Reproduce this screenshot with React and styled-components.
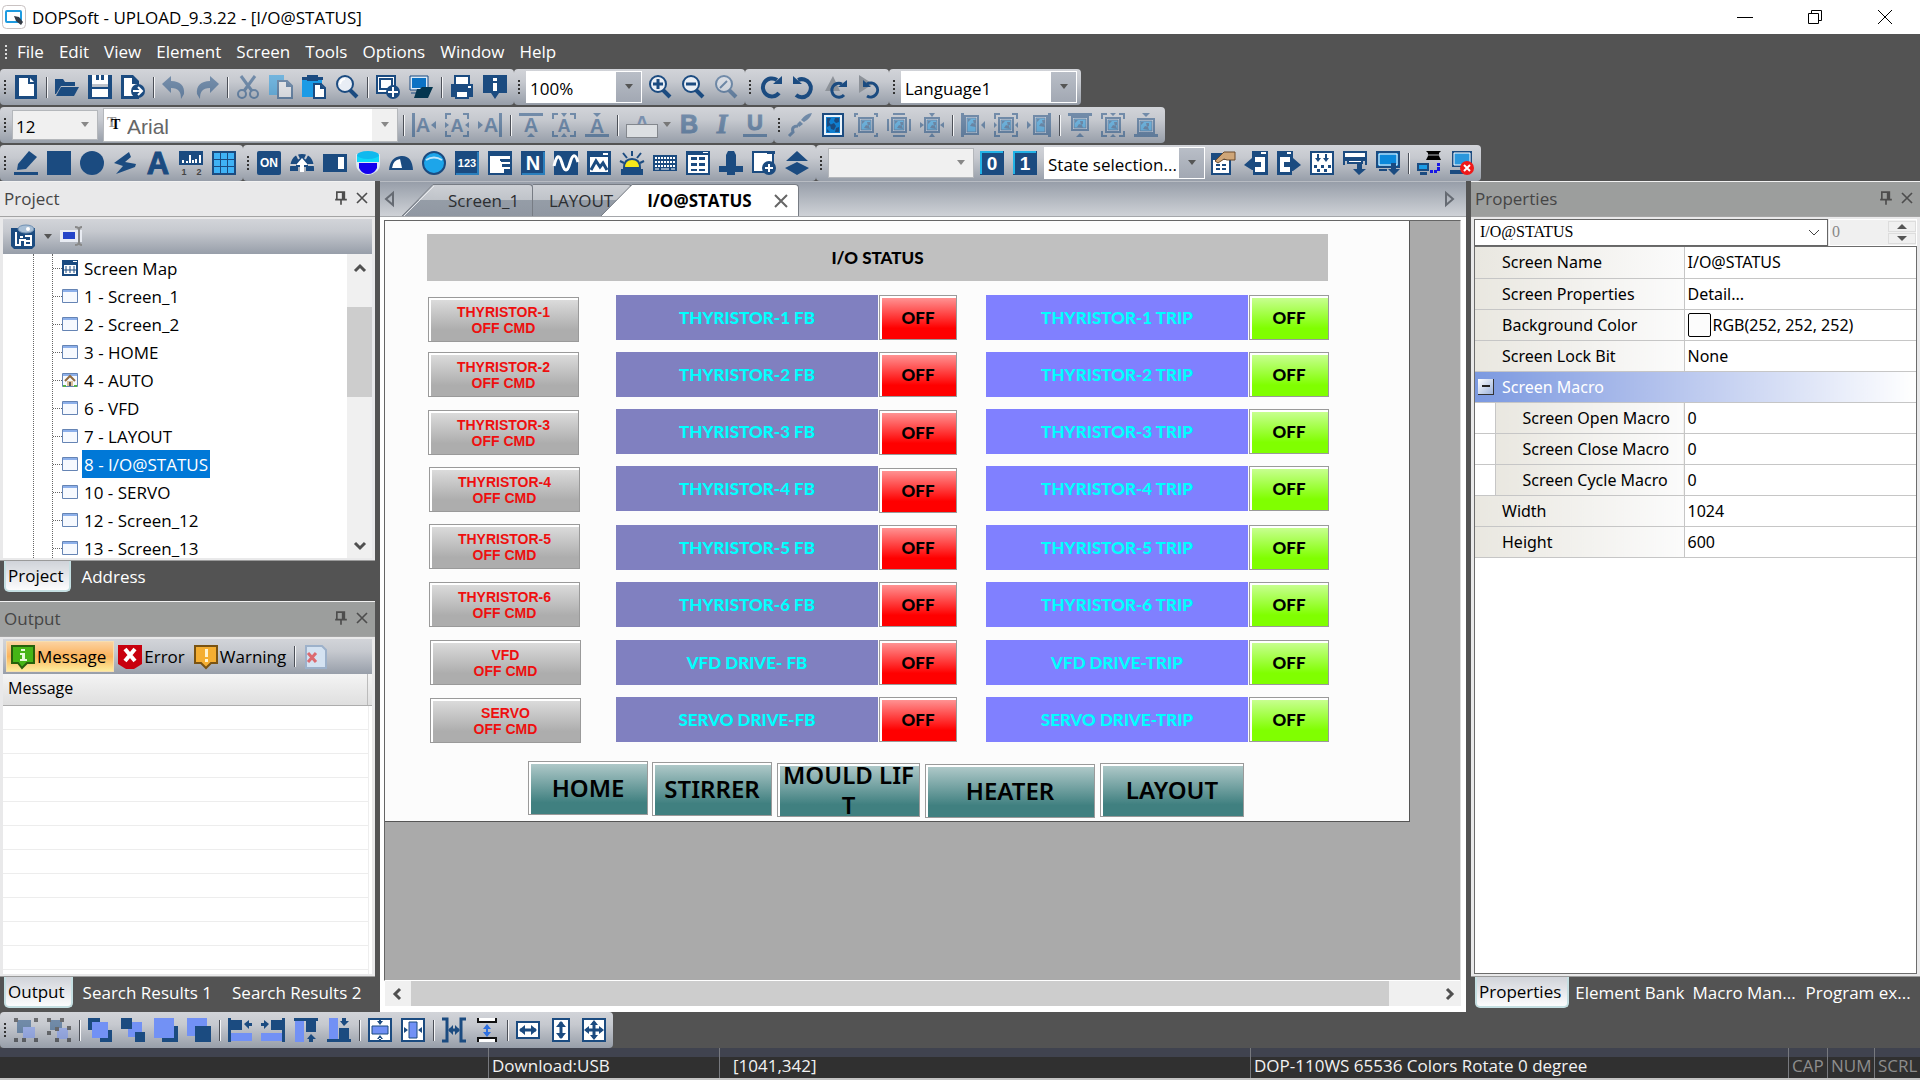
import React, { useState } from 'react'
import styled, { createGlobalStyle, css } from 'styled-components'

const NAVY = '#1b4b80'
const SKY = '#1a9be6'
const PERI = '#7291f5'
const UI_FONT = '"Open Sans", "Noto Sans", sans-serif'

const GlobalStyle = createGlobalStyle`
  * { box-sizing: border-box; }
  body {
    margin: 0;
    background: #535353;
    color: #000;
    font-family: ${UI_FONT};
    font-size: 17px;
  }
  button, input, select { font: inherit; color: inherit; margin: 0; }
  button { border: 0; padding: 0; background: none; }
  ul { list-style: none; margin: 0; padding: 0; }
`

/* ---------- icons ---------- */

const glyph = (x, y, size, text, fill = NAVY, extra = {}) => (
  <text x={x} y={y} fontSize={size} fontWeight='700' textAnchor='middle'
    fontFamily='"Liberation Sans", sans-serif' fill={fill} {...extra}>{text}</text>
)

const Lens = ({ children }) => <>
  <path d='M15 15l7 7' stroke={NAVY} strokeWidth='4'/>
  <circle cx='10' cy='9' r='8' fill='#e9eef5' stroke={NAVY} strokeWidth='2'/>
  {children}
</>

const Photo = ({ x = 5, y = 5, w = 14, h = 14 }) => <>
  <rect x={x} y={y} width={w} height={h} fill='#e4f1fb' stroke={NAVY} strokeWidth='2'/>
  <rect x={x + 2} y={y + 2} width={w - 4} height={h - 4} fill={SKY} stroke={NAVY} strokeWidth='1'/>
  <path d={`M${x + 3} ${y + 3}h3l-3 3zM${x + 8} ${y + 4}h3v3l-2 1zM${x + 5} ${y + 10}l2-3 3 1 1 3z`} fill={NAVY}/>
</>

const Corners = () => (
  <path d='M1 6V1h5M18 1h5v5M23 18v5h-5M6 23H1v-5' fill='none' stroke={NAVY} strokeWidth='2'/>
)

const ICONS = {
  file: <><path d='M1 0h22v24H1z' fill={NAVY}/><path d='M5 3h9v6h6v12H5z' fill='#fff'/><path d='M16 3l4 4h-4z' fill='#fff'/></>,
  open: <><path d='M0 4h8l2 3h10v4H6l-5 8H0z' fill={NAVY}/><path d='M6 12h18l-5 9H1z' fill={NAVY}/></>,
  save: <><path d='M0 0h4v12h16V0h4v24H0z' fill={NAVY}/><path d='M4 0h16v9H4zM4 14h16v8H4z' fill='#fff'/><path d='M8 0h3v5H8zM13 0h3v5h-3z' fill={NAVY}/></>,
  saveAs: <><path d='M0 0h12l6 6v18H0z' fill={NAVY}/><path d='M3 3h8v6h5v12H3z' fill='#fff'/><circle cx='17' cy='16' r='7' fill={NAVY}/><path d='M12 16h8M17 12l4 4-4 4' fill='none' stroke='#fff' strokeWidth='2'/></>,
  undo: <path d='M0 9L9 1v5c9 0 14 5 13 13l-3 5c0-7-2-11-10-11v5z' fill={NAVY}/>,
  redo: <path d='M24 9L15 1v5C6 6 1 11 2 19l3 5c0-7 2-11 10-11v5z' fill={NAVY}/>,
  cut: <g fill='none' stroke={NAVY}><circle cx='6' cy='19' r='4' strokeWidth='2'/><circle cx='18' cy='19' r='4' strokeWidth='2'/><path d='M8 16L19 1M16 16L5 1' strokeWidth='3'/></g>,
  copy: <><path d='M0 0h15v20H0z' fill={SKY}/><path d='M9 6h9l5 5v12H9z' fill='#fff' stroke={NAVY} strokeWidth='2'/><path d='M17 6v6h6' fill={NAVY}/></>,
  paste: <><path d='M0 2h20v20H0z' fill={SKY}/><path d='M5 0h11v6H5zM0 2h5v3H0zM16 2h5v3h-5z' fill={NAVY}/><path d='M12 9h7l4 4v10H12z' fill='#fff' stroke={NAVY} strokeWidth='2'/><path d='M18 9v5h5' fill={NAVY}/></>,
  preview: <Lens><path d='M5 9q1-5 5-5' fill='none' stroke='#fff' strokeWidth='2'/></Lens>,
  upload: <><path d='M1 1h18v17H1z' fill='#fff' stroke={NAVY} strokeWidth='2'/><path d='M4 4h12v10H4z' fill='#fff' stroke={NAVY} strokeWidth='2'/><circle cx='17' cy='17' r='7' fill={NAVY}/><path d='M17 12v10M12 17h10' stroke='#fff' strokeWidth='2'/></>,
  download: <><path d='M2 2h16v12H2z' fill='#0b72c4' stroke='#dbeaf7' strokeWidth='2'/><path d='M1 1h18v14H1zM2 18h6' fill='none' stroke={NAVY}/><path d='M8 14h3l2-2h11l-5 11H5z' fill='#05364f'/></>,
  print: <><path d='M4 0h16v9H4z' fill={NAVY}/><path d='M6 2h12v7H6z' fill='#fff'/><path d='M1 9h22v13H1z' fill={NAVY}/><path d='M6 16h12v7H6z' fill='#fff' stroke={NAVY} strokeWidth='2'/><path d='M18 11h3v2h-3z' fill='#fff'/></>,
  info: <><path d='M0 0h24v18h-8l-4 6-4-6H0z' fill={NAVY}/><path d='M10 3h4v3h-4zM10 8h4v8h-4z' fill='#fff'/></>,
  zoomIn: <Lens><path d='M10 4v10M5 9h10' stroke={NAVY} strokeWidth='3'/></Lens>,
  zoomOut: <Lens><path d='M5 9h10' stroke={NAVY} strokeWidth='3'/></Lens>,
  zoomFit: <Lens><path d='M6 13l7-7' stroke={NAVY} strokeWidth='2'/></Lens>,
  rotateR: <><path d='M18 5A9 9 0 1 0 20 18' fill='none' stroke={NAVY} strokeWidth='4'/><path d='M14 9h9V1z' fill={NAVY}/></>,
  rotateL: <><path d='M6 5A9 9 0 1 1 4 20' fill='none' stroke={NAVY} strokeWidth='4'/><path d='M10 9H1V1z' fill={NAVY}/></>,
  stepR: <><path d='M0 16L8 1l7 15z' fill='#8d9299'/><path d='M17 9a7 7 0 1 0 2 11' fill='none' stroke={NAVY} strokeWidth='3'/><path d='M13 12h9V5z' fill={NAVY}/></>,
  stepL: <><path d='M1 0l14 9L1 18z' fill='#8d9299'/><path d='M9 9a7 7 0 1 1 0 12' fill='none' stroke={NAVY} strokeWidth='3'/><path d='M13 12H5V5z' fill={NAVY}/></>,
  textLeft: <><path d='M0 0h3v24H0z' fill={NAVY}/>{glyph(11, 19, 20, 'A')}<path d='M24 8v8l-5-4z' fill={NAVY}/></>,
  textCenter: <><Corners/>{glyph(12, 19, 18, 'A')}<path d='M0 9l4 3-4 3zM24 9l-4 3 4 3z' fill={NAVY}/></>,
  textRight: <><path d='M21 0h3v24h-3z' fill={NAVY}/>{glyph(13, 19, 20, 'A')}<path d='M0 8v8l5-4z' fill={NAVY}/></>,
  textTop: <><path d='M0 0h24v3H0z' fill={NAVY}/>{glyph(12, 19, 20, 'A')}<path d='M8 24h8l-4-4z' fill={NAVY}/></>,
  textMiddle: <><Corners/>{glyph(12, 19, 18, 'A')}<path d='M9 0h6l-3 4zM9 24h6l-3-4z' fill={NAVY}/></>,
  textBottom: <><path d='M0 21h24v3H0z' fill={NAVY}/>{glyph(12, 20, 20, 'A')}<path d='M8 0h8l-4 4z' fill={NAVY}/></>,
  bold: glyph(12, 20, 25, 'B', NAVY, { stroke: NAVY }),
  italic: glyph(12, 20, 27, 'I', NAVY, { fontStyle: 'italic', fontFamily: '"Liberation Serif", serif', stroke: NAVY }),
  underline: <>{glyph(12, 17, 22, 'U', NAVY, { stroke: NAVY })}<path d='M0 21h24v3H0z' fill={NAVY}/></>,
  brush: <><path d='M24 0q-2 6-8 9l-3-2q4-6 11-7zM12 8l3 3-4 3-2-3z' fill={NAVY}/><path d='M10 13q-7 0-5 6l-4 4' fill='none' stroke={NAVY} strokeWidth='3'/></>,
  photo: <><path d='M1 0h22v24H1z' fill={NAVY}/><path d='M4 3h16v18H4z' fill='#0f7fd0' stroke='#eaf4fc' strokeWidth='2'/><path d='M6 5h4l-2 4 2 3-4 2zM14 5h4v4l-3 1-2-2zM9 12l4-2 2 3-2 4-3-1zM15 15l3-1v5h-4zM6 16l3 3H6z' fill={NAVY}/></>,
  fit1: <><Photo/><path d='M1 4V1h3M20 1h3v3M23 20v3h-3M4 23H1v-3' fill='none' stroke={NAVY} strokeWidth='2'/></>,
  fit2: <><Photo/><path d='M6 1h12M6 23h12M1 6v12M23 6v12' stroke={NAVY} strokeWidth='2'/></>,
  fit3: <><Photo/><path d='M9 0h6l-3 4zM9 24h6l-3-4zM0 9l4 3-4 3zM24 9l-4 3 4 3z' fill={NAVY}/></>,
  picLeft: <><path d='M0 0h3v24H0z' fill={NAVY}/><Photo x={4} y={3} w={13} h={18}/><path d='M24 8v8l-4-4z' fill={NAVY}/></>,
  picCenter: <><Corners/><Photo/><path d='M0 9l3 3-3 3zM24 9l-3 3 3 3z' fill={NAVY}/></>,
  picRight: <><path d='M21 0h3v24h-3z' fill={NAVY}/><Photo x={7} y={3} w={13} h={18}/><path d='M0 8v8l4-4z' fill={NAVY}/></>,
  picTop: <><path d='M0 0h24v3H0z' fill={NAVY}/><Photo x={4} y={4} w={16} h={13}/><path d='M8 24h8l-4-4z' fill={NAVY}/></>,
  picMiddle: <><Corners/><Photo/><path d='M9 0h6l-3 3zM9 24h6l-3-3z' fill={NAVY}/></>,
  picBottom: <><path d='M0 21h24v3H0z' fill={NAVY}/><Photo x={4} y={6} w={16} h={14}/><path d='M8 0h8l-4 4z' fill={NAVY}/></>,
  pencil: <><path d='M4 13L15 0l8 6-11 12-9 1z' fill={NAVY}/><path d='M0 21h24v3H0z' fill={NAVY}/></>,
  square: <path d='M0 0h24v24H0z' fill={NAVY}/>,
  circle: <circle cx='12' cy='12' r='12' fill={NAVY}/>,
  polygon: <path d='M16 1L1 12l9 3-7 8 19-7 1-3-11-2 6-5z' fill={NAVY}/>,
  text: glyph(12, 23, 31, 'A', NAVY, { stroke: NAVY }),
  scale: <><path d='M0 0h24v14H0z' fill={NAVY}/><path d='M4 9v3M8 10v2M11 4v8M14 9v3M17 8v4M21 4v8' stroke='#fff' strokeWidth='2'/>{glyph(5, 24, 9, '1', '#444')}{glyph(20, 24, 9, '2', '#444')}</>,
  table: <><path d='M0 0h24v24H0z' fill={NAVY}/><path d='M2 2h6v6H2zM9 2h6v6H9zM16 2h6v6h-6zM2 9h6v6H2zM9 9h6v6H9zM16 9h6v6h-6zM2 16h6v6H2zM9 16h6v6H9zM16 16h6v6h-6z' fill='#3fb2f5'/></>,
  on: <><rect width='24' height='24' rx='2' fill={NAVY}/>{glyph(12, 16, 12, 'ON', '#fff')}</>,
  meter: <><path d='M0 17Q1 3 12 3t12 14v3h-8v-4H8v4H0z' fill={NAVY}/><path d='M6 2l3 6M18 2l-3 6M0 14h6M18 14h6' stroke='#c9ccd2' strokeWidth='2'/><path d='M12 7l6 7h-4v7h-4v-7H6z' fill='#fff'/></>,
  slider: <><path d='M0 3h24v18H0z' fill={NAVY}/><path d='M15 6h6v12h-6z' fill='#fff'/></>,
  tank: <><path d='M0 3h24v10q0 9-12 11Q0 22 0 13z' fill='#dfe8f2'/><path d='M3 12h18v5q-3 6-9 6t-9-6z' fill='#1200ee'/><path d='M1 4v7h22V4z' fill='#10d8f8'/><ellipse cx='12' cy='4' rx='11' ry='4' fill='#10b9ee'/></>,
  gauge: <><path d='M0 19Q1 6 12 5t12 14z' fill={NAVY}/><path d='M3 17q1-8 8-9l2 9z' fill='#fff'/></>,
  lamp: <><circle cx='12' cy='12' r='11' fill='#1da5ea' stroke={NAVY} strokeWidth='2'/><path d='M4 9q8-5 16 0' fill='none' stroke='#bfe6fb' strokeWidth='2'/></>,
  numeric: <><path d='M0 0h24v24H0z' fill={NAVY}/><path d='M23 1v22H1' fill='none' stroke='#2a7fbd' strokeWidth='2'/>{glyph(12, 16, 11, '123', '#fff')}</>,
  list: <><path d='M0 0h24v24H0z' fill={NAVY}/><path d='M2 5h20v3H13v3h9v2h-8v3h8v2h-6v4H2z' fill='#fff'/><path d='M12 8h8v2h-8zM14 13h8v2h-8z' fill={NAVY}/></>,
  n: <><path d='M0 0h24v24H0z' fill={NAVY}/><path d='M1 23h22V1' fill='none' stroke='#2a7fbd' strokeWidth='2'/>{glyph(12, 19, 20, 'N', '#fff')}</>,
  wave: <><path d='M0 0h24v24H0z' fill={NAVY}/><path d='M0 15Q4-2 8 12t8 0 8-1' fill='none' stroke='#fff' strokeWidth='3'/></>,
  trend: <><path d='M0 0h24v24H0z' fill={NAVY}/><path d='M3 6h18v15H3zM16 2h5v2h-5z' fill='#fff'/><path d='M4 19l5-9 4 6 3-4 4 7' fill='none' stroke={NAVY} strokeWidth='3'/></>,
  alarm: <><path d='M4 17q0-9 8-9t8 9z' fill='#f8e81a' stroke={NAVY} strokeWidth='2'/><path d='M1 18h22v6H1zM11 0h2v5h-2z' fill={NAVY}/><path d='M3 2l4 5M21 2l-4 5M0 10l4 2M24 10l-4 2' stroke={NAVY} strokeWidth='2'/></>,
  keyboard: <><path d='M0 4h24v16H0z' fill={NAVY}/><path d='M2 7h20M2 11h20M2 15h20' stroke='#fff' strokeWidth='2' strokeDasharray='2 1'/><path d='M2 18h4M8 18h8M18 18h4' stroke='#fff'/></>,
  recipe: <><path d='M0 0h24v24H0z' fill={NAVY}/><path d='M2 4h20v18H2z' fill='#fff'/><path d='M5 6h6v3H5zM13 6h6v3h-6zM5 12h6v3H5zM13 12h6v3h-6zM5 18h6v2H5zM13 18h6v2h-6z' fill={NAVY}/><path d='M17 1h5v1h-5z' fill='#fff'/></>,
  pipe: <path d='M9 0h6l2 4v11h7v6h-8v3H8v-3H0v-6h7V4z' fill={NAVY}/>,
  pageAdd: <><path d='M1 1h20v20H1z' fill='#fff' stroke={NAVY} strokeWidth='2'/><path d='M15 0h8v3h-8z' fill={NAVY}/><circle cx='17' cy='17' r='7' fill={NAVY}/><path d='M17 13v8M13 17h8' stroke='#fff' strokeWidth='2'/></>,
  flip: <path d='M12 0l11 10H1zM12 11l12 6-12 7-12-7z' fill={NAVY}/>,
  state0: <><path d='M0 0h24v24H0z' fill={NAVY}/><path d='M1 23V1h22' fill='none' stroke='#22b3e6' strokeWidth='2'/>{glyph(12, 19, 19, '0', '#fff')}</>,
  state1: <><path d='M0 0h24v24H0z' fill={NAVY}/><path d='M1 23V1h22' fill='none' stroke='#22b3e6' strokeWidth='2'/>{glyph(12, 19, 19, '1', '#fff')}</>,
  props: <><path d='M0 2h20v22H0z' fill={NAVY}/><path d='M2 9h16v13H2z' fill='#fff'/><path d='M5 14h4M11 14h4M5 18h4M11 18h4' stroke={NAVY} strokeWidth='2'/><path d='M4 10l9-9h11v8h-8l-3-1-6 4z' fill='#cfa678' stroke='#6a4b2c'/></>,
  prevScreen: <><path d='M8 0h16v24H9v-5h-1L0 14l8-7z' fill={NAVY}/><path d='M11 6h10v15H11v-5h6v-5h-6zM17 1h5v2h-5z' fill='#fff'/></>,
  nextScreen: <><path d='M0 0h16v7l8 7-8 6H15v4H0z' fill={NAVY}/><path d='M3 6h10v5H7v5h6v5H3zM10 1h4v2h-4z' fill='#fff'/></>,
  compile: <><path d='M1 1h22v22H1z' fill='#fff' stroke={NAVY} strokeWidth='2'/><path d='M8 3v5M16 3v5' stroke={NAVY} strokeWidth='2'/><path d='M5 7h6l-3 4zM13 7h6l-3 4zM4 14h3v3H4zM11 14h3v3h-3zM18 14h3v3h-3zM7 18h3v3H7zM14 18h3v3h-3z' fill={NAVY}/></>,
  dlAll: <><path d='M1 1h22v6H1zM5 7h14v5H5z' fill='#fff' stroke={NAVY} strokeWidth='2'/><path d='M1 14V9h22v5' fill='none' stroke={NAVY} strokeWidth='2'/><path d='M14 12h5v6h4l-7 6-6-6h4z' fill={NAVY}/></>,
  dlScreen: <><path d='M1 1h22v15H1z' fill='#0b88da' stroke={NAVY} strokeWidth='2'/><path d='M3 3h18v11H3z' fill='none' stroke='#fff'/><path d='M3 18h8v2H3z' fill={NAVY}/><path d='M15 12h5v6h4l-6 6-6-6h3z' fill={NAVY}/></>,
  simOn: <><path d='M9 0h15l-2 2v3l2 4H9l2-4V2z' fill='#000'/><path d='M10 4h13' stroke='#b5b8bc'/><path d='M0 12h12v8H0zM3 21h7v3H3z' fill={NAVY}/><path d='M2 14h8v4H2z' fill={SKY}/><path d='M13 19h3v3h-3zM17 19h3v3h-3zM20 12h3v3h-3zM20 16h3v4h-3z' fill='#1717e6'/></>,
  simOff: <><path d='M2 0h20v16H2zM0 19h16v4H0z' fill={NAVY}/><path d='M4 2h16v12H4z' fill='#2b97dc' stroke='#fff'/><circle cx='17' cy='17' r='7' fill='#f01818'/><path d='M14 14l6 6M20 14l-6 6' stroke='#fff' strokeWidth='2'/></>,
  group: <><path d='M3 2h14v13H3z' fill='#1b4b80'/><path d='M9 9h12v11H9z' fill={PERI}/><path d='M0 0h4v4H0zM20 0h4v4h-4zM0 20h4v4H0zM20 20h4v4h-4zM8 20h4v4H8z' fill='#111'/></>,
  ungroup: <><path d='M3 2h12v10H3z' fill='#1b4b80'/><path d='M10 10h11v11H10z' fill={PERI}/><path d='M0 0h4v4H0zM13 0h4v4h-4zM0 13h4v4H0zM8 9h4v4H8zM20 8h4v4h-4zM8 20h4v4H8zM20 20h4v4h-4z' fill='#111'/></>,
  forward: <><path d='M0 0h12v12H0zM12 12h12v12H12z' fill={NAVY}/><path d='M4 4h16v16H4z' fill={PERI}/></>,
  backward: <><path d='M7 4h14v15H7z' fill={PERI}/><path d='M0 0h11v11H0zM14 14h10v10H14z' fill={NAVY}/></>,
  toFront: <><path d='M8 8h16v16H8z' fill={NAVY}/><path d='M0 0h20v20H0z' fill={PERI}/></>,
  toBack: <><path d='M0 0h20v18H0z' fill={PERI}/><path d='M8 8h16v16H8z' fill={NAVY}/></>,
  alLeft: <><path d='M0 0h3v24H0zM3 2h11v10H3z' fill={NAVY}/><path d='M3 15h21v8H3z' fill={PERI}/><path d='M24 5v3h-3v3l-5-5 5-4v3z' fill={NAVY}/></>,
  alRight: <><path d='M21 0h3v24h-3zM10 2h12v10H10z' fill={NAVY}/><path d='M0 15h21v8H0z' fill={PERI}/><path d='M0 5v3h3v3l5-5-5-4v3z' fill={NAVY}/></>,
  alTop: <><path d='M0 0h24v3H0zM12 3h10v11H12z' fill={NAVY}/><path d='M1 3h9v21H1z' fill={PERI}/><path d='M15 24v-3h-2l4-5 5 5h-3v3z' fill={NAVY}/></>,
  alBottom: <><path d='M0 21h24v3H0zM12 10h10v11H12z' fill={NAVY}/><path d='M2 0h9v21H2z' fill={PERI}/><path d='M15 0v3h-2l4 5 5-5h-3V0z' fill={NAVY}/></>,
  midH: <><path d='M1 1h22v22H1z' fill='#fff' stroke={NAVY} strokeWidth='2'/><path d='M4 8h16v8H4z' fill={PERI} stroke={NAVY}/><path d='M9 3h6l-3 4zM9 21h6l-3-4zM11 1h2v3h-2zM11 20h2v3h-2z' fill={NAVY}/></>,
  midV: <><path d='M1 1h22v22H1z' fill='#fff' stroke={NAVY} strokeWidth='2'/><path d='M8 4h8v16H8z' fill={PERI} stroke={NAVY}/><path d='M3 9v6l4-3zM21 9v6l-4-3z' fill={NAVY}/></>,
  spaceH: <><path d='M0 1h5v22H0M24 1h-5v22h5' fill='none' stroke={NAVY} strokeWidth='3'/><path d='M7 12h10' stroke={NAVY} strokeWidth='3'/><path d='M11 7v10l-5-5zM13 7v10l5-5z' fill={NAVY}/></>,
  spaceV: <><path d='M3 0v4h18V0M3 24v-4h18v4' fill='#fff' stroke='#111' strokeWidth='2'/><path d='M12 8v8' stroke='#2d6fe0' strokeWidth='2'/><path d='M8 11h8l-4-5zM8 14h8l-4 5z' fill='#2d6fe0'/></>,
  sameW: <><path d='M1 4h22v16H1z' fill='#fff' stroke={NAVY} strokeWidth='2'/><path d='M4 12h16' stroke={NAVY} strokeWidth='3'/><path d='M9 7v10l-6-5zM15 7v10l6-5z' fill={NAVY}/></>,
  sameH: <><path d='M4 1h16v22H4z' fill='#fff' stroke={NAVY} strokeWidth='2'/><path d='M12 4v16' stroke={NAVY} strokeWidth='3'/><path d='M7 9h10l-5-6zM7 15h10l-5 6z' fill={NAVY}/></>,
  sameWH: <><path d='M1 1h22v22H1z' fill='#fff' stroke={NAVY} strokeWidth='2'/><path d='M12 4v16M4 12h16' stroke={NAVY} strokeWidth='3'/><path d='M8 7h8l-4-5zM8 17h8l-4 5zM7 8v8l-5-4zM17 8v8l5-4z' fill={NAVY}/></>,
  tree: <><path d='M0 3h24v18l-3 3H3l-3-3z' fill={NAVY}/><path d='M5 7v13h4v-5h5v5h6v-4h-6M9 12h3M14 11h6v5' fill='none' stroke='#fff' strokeWidth='2'/><ellipse cx='15' cy='4' rx='8' ry='4' fill='#a8bfd6' stroke='#6f90b3'/><circle cx='17' cy='4' r='2' fill='#fff'/></>,
  rename: <><path d='M0 5h22v12H0z' fill='#e8ebf2'/><path d='M3 7h12v7H3z' fill='#2444c8'/><path d='M15 2q4 0 4 3v12q0 3-4 3M22 2q-3 0-3 3v12q0 3 3 3' fill='none' stroke='#888' strokeWidth='2'/></>,
  message: <><path d='M1 1h22v17h-7l-5 5-4-5H1z' fill='#46b516' stroke='#27610c' strokeWidth='2'/><path d='M10 4h4v2h-4zM9 8h5v6h2v2H9v-2h2v-4H9z' fill='#e6fbd8'/></>,
  error: <><path d='M0 0h24v19l-8 5H8l-8-5z' fill='#c8000e'/><path d='M7 4l10 12M17 4L7 16' stroke='#fff' strokeWidth='4'/></>,
  warning: <><path d='M1 1h22v17h-6l-5 5-5-5H1z' fill='#f4ae32' stroke='#7a5312' strokeWidth='2'/><path d='M11 4h3v8h-3zM11 14h3v3h-3z' fill='#fff3d0'/></>,
  clear: <><path d='M3 1h16l4 4v18H3z' fill='#d4e2f1' stroke='#9db1ca' strokeWidth='2'/><path d='M5 8l8 9M13 8l-8 9' stroke='#dc6a70' strokeWidth='3'/></>,
  pin: <><path d='M7 5h9v9H7zM5 14h14M12 14v6M14 5v9' fill='none' stroke='currentColor' strokeWidth='2'/></>,
  close: <path d='M6 6l12 12M18 6L6 18' stroke='currentColor' strokeWidth='2'/>,
}

const Svg = styled.svg`
  display: block;
  flex: none;
  overflow: visible;
  opacity: ${p => (p.$dim ? 0.5 : 1)};
`

const Icon = ({ name, size = 24, dim }) => (
  <Svg width={size} height={size} viewBox='0 0 24 24' aria-hidden='true' $dim={dim}>{ICONS[name]}</Svg>
)

const Arrow = ({ color = '#555' }) => (
  <Svg width='10' height='6' viewBox='0 0 10 6' aria-hidden='true'><path d='M1 0h8L5 5z' fill={color}/></Svg>
)

const Chevron = ({ d }) => (
  <Svg width='12' height='12' viewBox='0 0 12 12' aria-hidden='true'>
    <path d={d} fill='none' stroke='#505050' strokeWidth='3'/>
  </Svg>
)

/* ---------- window chrome ---------- */

const Window = styled.div`
  display: flex;
  flex-direction: column;
  height: 100vh;
  min-height: 760px;
`

const TitleBar = styled.header`
  display: flex;
  align-items: center;
  flex: none;
  height: 34px;
  padding-left: 2px;
  background: #fff;
`

const Title = styled.h1`
  flex: 1;
  margin: 0 0 0 6px;
  font-size: 17px;
  font-weight: 400;
`

const WindowButton = styled.button`
  display: grid;
  place-items: center;
  width: 70px;
  height: 34px;
`

const MenuBar = styled.nav`
  display: flex;
  align-items: center;
  flex: none;
  gap: 15px;
  height: 35px;
  padding-left: 5px;
  color: #fff;
`

const MenuItem = styled.button`
  white-space: nowrap;
`

const Grip = styled.span`
  flex: none;
  width: 2px;
  height: 14px;
  margin: ${p => (p.$menu ? '0 -5px 0 0' : '0 4px')};
  background: repeating-linear-gradient(${p => (p.$menu ? '#ddd' : '#333')} 0 2px, transparent 2px 4px);
`

const barFill = css`
  background: linear-gradient(#d2d4d9, #c6c9cf 35%, #979ea9);
`

const ToolRow = styled.div`
  display: flex;
  flex: none;
  height: 36px;
`

const ToolRows = styled.div`
  display: grid;
  flex: none;
  gap: 2px;
`

const ToolBar = styled.div`
  display: flex;
  align-items: center;
  flex: none;
  padding-right: 2px;
  border-radius: 4px;
  ${barFill}
`

const ToolButton = styled.button`
  display: flex;
  align-items: center;
  gap: 4px;
  width: ${p => (p.$wide ? '51px' : '33px')};
  height: 32px;
  padding-left: 4px;
`

const ViewModeButton = styled.button`
  display: grid;
  place-items: center;
  width: 25px;
  height: 24px;
`

const Separator = styled.span`
  align-self: center;
  width: 2px;
  height: 21px;
  margin: 0 3px;
  border-left: 1px solid #4c5058;
  border-right: 1px solid #f4f5f7;
`

const ComboBox = styled.span`
  display: grid;
  grid-template-columns: 1fr 25px;
  width: ${p => p.$width}px;
  height: ${p => p.$height || 32}px;
  margin: 0 ${p => p.$gap || 2}px 0 2px;
  border: 1px solid ${p => (p.$flat ? '#b4b7bb' : '#fff')};
  background: ${p => p.$fill || '#fff'};
  color: ${p => p.$ink || '#000'};
  font-size: ${p => p.$size || 17}px;

  select {
    grid-area: 1 / 1 / 2 / 3;
    min-width: 0;
    padding: 2px 28px 0 ${p => p.$indent || 3}px;
    border: 0;
    background: none;
    appearance: none;
    opacity: 1;
    font-family: ${p => p.$face || 'inherit'};
  }
`

const ComboArrow = styled.span`
  grid-area: 1 / 2;
  display: grid;
  place-items: center;
  background: ${p => (p.$raised ? 'linear-gradient(#b9bec7, #a2a8b3)' : p.$fill || 'transparent')};
  pointer-events: none;
`

const FontMark = styled.span`
  grid-area: 1 / 1;
  align-self: center;
  padding-left: 7px;
  font: 700 14px "Liberation Serif", serif;
  color: #000;
  text-shadow: -4px -2px 0 #999;
`

const ColorSwatch = styled.span`
  width: 32px;
  height: 14px;
  margin-top: -10px;
  border: 1px solid #83878d;
  background: #dcdfe2;
`

const ColorLetter = styled.span`
  display: grid;
  justify-items: center;
  font: 700 20px/22px "Liberation Sans", sans-serif;
  color: #7a90ae;
`

const Tools = ({ items, dim }) => items.map((name, i) => (
  name === '|'
    ? <Separator key={i}/>
    : <ToolButton key={i} aria-label={name}><Icon name={name} dim={dim && name !== 'photo'}/></ToolButton>
))

const Combo = ({ label, value, raised, disabled, mark, arrowFill, ...style }) => (
  <ComboBox {...style}>
    {mark && <FontMark>T</FontMark>}
    <select aria-label={label} defaultValue={value}><option>{value}</option></select>
    <ComboArrow $raised={raised} $fill={arrowFill}><Arrow color={disabled ? '#888' : '#555'}/></ComboArrow>
  </ComboBox>
)

/* ---------- docked panels ---------- */

const Body = styled.main`
  flex: 1;
  display: grid;
  grid-template-columns: 375px minmax(0, 1fr) 449px;
  grid-template-rows: minmax(0, 1fr);
  gap: 5px;
  min-height: 0;
`

const LeftColumn = styled.div`
  display: grid;
  grid-template-rows: minmax(0, 415fr) minmax(0, 411fr);
  gap: 5px;
  min-height: 0;
`

const Dock = styled.section`
  display: flex;
  flex-direction: column;
  min-width: 0;
  min-height: 0;
`

const Panel = styled.div`
  flex: 1;
  display: flex;
  flex-direction: column;
  min-height: 0;
  padding: 0 3px 2px;
  border-bottom: 1px solid #9a9a9a;
  background: #e9e9ea;
`

const PanelHeader = styled.div`
  display: flex;
  align-items: center;
  flex: none;
  height: 36px;
  margin: 0 -3px 2px;
  padding: 0 2px 2px 4px;
  border-top: 1px solid #f2f2f2;
  border-bottom: 1px solid #a4a4a4;
  background: ${p => (p.$active ? '#e9e9ea' : '#9c9e9d')};
  color: #454545;

  h2 { flex: 1; margin: 0; font-size: 17px; font-weight: 400; }
  button { width: 21px; color: #4d4d4d; }
`

const PanelBar = styled.div`
  display: flex;
  align-items: center;
  flex: none;
  height: 35px;
  padding-left: ${p => p.$inset || 3}px;
  ${barFill}
`

const TabStrip = styled.div`
  display: flex;
  flex: none;
  height: 35px;
  padding: 0 0 4px 4px;
`

const DockTab = styled.button`
  padding: 0 ${p => p.$pad || 10}px;
  height: 31px;
  white-space: nowrap;
  color: #fff;
  ${p => p.$active && css`
    padding: 0 6px 0 2px;
    border: 2px solid #c5dfe2;
    border-top: 0;
    border-radius: 0 0 5px 5px;
    background: linear-gradient(#d0d3d9, #fcfcfd);
    color: #000;
  `}
`

const Scroller = styled.div`
  flex: 1;
  display: flex;
  min-height: 0;
  background: #fff;
`

const Tree = styled.ul`
  flex: 1;
  min-width: 0;
  overflow: hidden;
  margin-left: 30px;
  border-left: 1px dotted #666;

  ul { margin-left: 18px; border-left: 1px dotted #666; }
  li li { display: flex; align-items: center; height: 28px; }
  li li::before { content: ''; width: 9px; border-top: 1px dotted #666; }
`

const TreeButton = styled.button`
  height: 28px;
  margin-left: 4px;
  padding: 0 2px;
  white-space: nowrap;
  background: ${p => (p.$selected ? '#0078d7' : 'none')};
  color: ${p => (p.$selected ? '#fff' : '#000')};
`

const VScroll = styled.div`
  display: grid;
  grid-template-rows: 28px 25fr 91fr 137fr 25px;
  width: 25px;
  background: #f0f0f0;
  button { display: grid; place-items: center; }
`

const Thumb = styled.span`
  background: #cdcdcd;
`

const FilterButton = styled.button`
  display: flex;
  align-items: center;
  gap: 2px;
  height: 31px;
  padding: 0 ${p => (p.$on ? 7 : 5)}px 0 4px;
  ${p => p.$on && css`
    border: 1px solid #f6deb0;
    background: linear-gradient(#fbd2a0, #fbb869 40%, #fbb45b 50%, #fdec9c);
  `}
`

const OutputTable = styled.table`
  width: 100%;
  border-collapse: collapse;
  font-size: 16px;

  th {
    height: 31px;
    padding: 0 5px 2px;
    border-bottom: 1px solid #adadad;
    border-right: 1px solid #bbb;
    background: linear-gradient(#f4f4f4, #dfdfdf);
    font-weight: 400;
    text-align: left;
  }
  th + th { width: 5px; padding: 0; border-right: 0; }
`

const OutputList = styled.div`
  flex: 1;
  display: flex;
  flex-direction: column;
`

const OutputRows = styled.div`
  flex: 1;
  margin-right: 3px;
  border-right: 1px solid #eee;
  background: repeating-linear-gradient(#fff 0 23px, #ededed 23px 24px);
`

/* ---------- editor ---------- */

const Editor = styled.section`
  display: flex;
  flex-direction: column;
  min-width: 0;
  min-height: 0;
  background: #fff;
`

const DocTabs = styled.div`
  display: flex;
  align-items: flex-end;
  flex: none;
  height: 36px;
  padding-left: 5px;
  border-top: 1px solid #b8bcc3;
  border-bottom: 1px solid #a5a7ab;
  background: linear-gradient(#979ea9, #cfd2d7);

  > button:first-child { align-self: center; width: 17px; }
  > button:last-child { align-self: center; margin: 0 12px 0 auto; }
`

const DocTab = styled.div`
  display: flex;
  height: 32px;
  margin-left: ${p => (p.$overlap ? '-31px' : 0)};
  color: ${p => (p.$active ? '#000' : '#2c2e31')};
  font-weight: ${p => (p.$active ? 700 : 400)};
`

const DocTabBody = styled.div`
  display: flex;
  align-items: center;
  padding: 0 ${p => p.$right}px 0 ${p => p.$left}px;
  border-top: 1px solid #777c84;
  border-right: 1px solid #777c84;
  border-radius: 0 4px 0 0;
  background: ${p => (p.$active ? '#fff' : 'linear-gradient(#cdd0d5, #bfc3c9 50%, #959da7 50%, #9097a2)')};

  button { font-weight: inherit; }
  button + button { margin-left: 17px; color: #666; }
`

const Slant = ({ active }) => (
  <Svg width='32' height='32' viewBox='0 0 32 32' aria-hidden='true'>
    <defs>
      <linearGradient id='tabFill' x1='0' y1='0' x2='0' y2='1'>
        <stop offset='0' stopColor='#cdd0d5'/><stop offset='.5' stopColor='#bfc3c9'/>
        <stop offset='.5' stopColor='#959da7'/><stop offset='1' stopColor='#9097a2'/>
      </linearGradient>
    </defs>
    <path d='M32 0L0 32h32z' fill={active ? '#fff' : 'url(#tabFill)'}/>
    <path d='M32 .500h-1L0 32' fill='none' stroke='#777c84'/>
    {!active && <path d='M32 2L2 32' fill='none' stroke='#e8eaed'/>}
  </Svg>
)

const Workspace = styled.div`
  flex: 1;
  min-height: 0;
  margin: 3px 5px 0 4px;
  overflow: hidden;
  border: 1px solid #666;
  border-right-color: #ddd;
  border-bottom-color: #fff;
  background: #aaa;
`

/* The HMI screen is a fixed 1024x600 panel with freely placed elements. */
const HmiScreen = styled.div`
  position: relative;
  width: 1025px;
  height: 601px;
  border-right: 1px solid #555;
  border-bottom: 1px solid #555;
  background: #fcfcfc;
`

const place = css`
  position: absolute;
  left: ${p => p.$x}px;
  top: ${p => p.$y}px;
  width: ${p => p.$w}px;
  height: ${p => p.$h}px;
`

const HmiLabel = styled.div`
  ${place}
  display: grid;
  place-items: center;
  background: ${p => p.$fill};
  color: ${p => p.$ink || '#00ffff'};
  font: 900 17px/20px Lato, sans-serif;
`

const HmiButton = styled.button`
  ${place}
  display: grid;
  place-content: center;
  border: 1px solid #9a9a9a;
  box-shadow: inset 1px 1px 0 1px #fff;
  text-align: center;
  white-space: pre-line;
`

const CmdButton = styled(HmiButton)`
  background: linear-gradient(#dedede, #adadad 75%);
  color: #ee0f0f;
  font: 700 14px/16px "Liberation Sans", sans-serif;
`

const Lamp = styled(HmiButton)`
  background: linear-gradient(${p => (p.$green ? '#ccff99, #80ff00 75%' : '#ff9c9c, #ff0000 75%')});
  font: 900 17px/20px Lato, sans-serif;
`

const NavButton = styled(HmiButton)`
  background: linear-gradient(#b4cccc, #408080 78%);
  font: 600 24px/30px "Noto Sans", sans-serif;
`

const HScroll = styled.div`
  display: grid;
  flex: none;
  grid-template-columns: 26px 978fr 47fr 25px;
  height: 25px;
  margin: 0 5px 6px;
  background: #f0f0f0;
  button { display: grid; place-items: center; }
`

/* ---------- properties ---------- */

const ObjectRow = styled.div`
  display: grid;
  grid-template-columns: minmax(0, 1fr) 88px;
  gap: 1px;
  height: 27px;
`

const ObjectSelect = styled.span`
  display: grid;
  grid-template-columns: 1fr 26px;
  border: 1px solid #666;
  background: #fff;

  select {
    grid-area: 1 / 1 / 2 / 3;
    padding: 0 5px 2px;
    border: 0;
    background: none;
    appearance: none;
    font: 16px "Liberation Serif", serif;
  }
  svg { grid-area: 1 / 2; align-self: center; justify-self: center; pointer-events: none; }
`

const Spinner = styled.span`
  display: flex;
  border: 1px solid #fff;
  background: #f0f0f0;

  input {
    flex: 1;
    min-width: 0;
    padding: 0 0 2px 2px;
    border: 0;
    background: none;
    color: #888;
    font: 16px "Liberation Serif", serif;
  }
  span { display: grid; gap: 1px; width: 28px; padding: 1px 0; }
  button { display: grid; place-items: center; border: 1px solid #ddd; }
`

const PropertyBox = styled.div`
  flex: 1;
  border: 1px solid #6c6c6c;
  background: #fff;
`

const PropertyTable = styled.table`
  width: 100%;
  border-collapse: collapse;
  font: 16px/20px "Noto Sans", sans-serif;

  td, th { height: 31px; padding: 0 3px; border-bottom: 1px solid #c6c6c6; font-weight: 400; text-align: left; }
`

const PropName = styled.th`
  width: ${p => (p.$sub ? '189px' : '209px')};
  border-right: 1px solid #c6c6c6;
  background: linear-gradient(90deg, #e9e7e0, #fbfbfb);
  && { padding-left: 27px; }
`

const Gutter = styled.td`
  width: 20px;
  border-right: 1px solid #c6c6c6;
  && { padding: 0; }
`

const MacroHead = styled.th`
  background: linear-gradient(90deg, #7b99e0, #a9baea 35%, #fff);
  color: #fff;
  && { padding-left: 3px; }
  > span { display: flex; align-items: center; gap: 8px; }
`

const Expander = styled.button`
  display: grid;
  place-items: center;
  width: 16px;
  height: 16px;
  border-right: 1px solid #333;
  border-bottom: 1px solid #333;
  background: linear-gradient(135deg, #fff, #9db3dc);
  &::before { content: ''; width: 8px; height: 2px; background: #222; }
`

const ColorValue = styled.span`
  display: flex;
  align-items: center;
  gap: 2px;
  &::before { content: ''; width: 21px; height: 22px; border: 1px solid #000; border-radius: 2px; background: #fcfcfc; }
`

/* ---------- status bar ---------- */

const StatusBar = styled.footer`
  display: grid;
  flex: none;
  grid-template-columns: 488fr 231fr 531fr 538fr 39px 47px 46px;
  height: 32px;
  border-bottom: 2px solid #c4c4c4;
  background: linear-gradient(#40434f 0 9px, #303030 9px);
  color: #f2f2f2;
`

const StatusCell = styled.span`
  display: flex;
  align-items: center;
  min-width: 0;
  padding: 4px 0 0 ${p => p.$pad || 3}px;
  border-left: 1px solid ${p => (p.$first ? 'transparent' : '#77797e')};
  white-space: nowrap;
  color: ${p => (p.$off ? '#8d8d8d' : 'inherit')};
`

/* ---------- data ---------- */

const MENUS = ['File', 'Edit', 'View', 'Element', 'Screen', 'Tools', 'Options', 'Window', 'Help']

const SCREENS = [
  'Screen Map', '1 - Screen_1', '2 - Screen_2', '3 - HOME', '4 - AUTO', '6 - VFD', '7 - LAYOUT',
  '8 - I/O@STATUS', '10 - SERVO', '12 - Screen_12', '13 - Screen_13',
]

// x/y are element coordinates on the HMI screen
const CHANNELS = [
  { cmd: 'THYRISTOR-1', fb: 'THYRISTOR-1 FB', trip: 'THYRISTOR-1 TRIP', x: 43, y: 74, cmdY: 76, lampY: 74 },
  { cmd: 'THYRISTOR-2', fb: 'THYRISTOR-2 FB', trip: 'THYRISTOR-2 TRIP', x: 43, y: 131, cmdY: 131, lampY: 131 },
  { cmd: 'THYRISTOR-3', fb: 'THYRISTOR-3 FB', trip: 'THYRISTOR-3 TRIP', x: 43, y: 188, cmdY: 189, lampY: 189 },
  { cmd: 'THYRISTOR-4', fb: 'THYRISTOR-4 FB', trip: 'THYRISTOR-4 TRIP', x: 44, y: 245, cmdY: 246, lampY: 247 },
  { cmd: 'THYRISTOR-5', fb: 'THYRISTOR-5 FB', trip: 'THYRISTOR-5 TRIP', x: 44, y: 304, cmdY: 303, lampY: 304 },
  { cmd: 'THYRISTOR-6', fb: 'THYRISTOR-6 FB', trip: 'THYRISTOR-6 TRIP', x: 44, y: 361, cmdY: 361, lampY: 361 },
  { cmd: 'VFD', fb: 'VFD DRIVE- FB', trip: 'VFD DRIVE-TRIP', x: 45, y: 419, cmdY: 419, lampY: 419 },
  { cmd: 'SERVO', fb: 'SERVO DRIVE-FB', trip: 'SERVO DRIVE-TRIP', x: 45, y: 476, cmdY: 477, lampY: 476 },
]

const NAV = [
  { text: 'HOME', x: 143, y: 540, w: 120 },
  { text: 'STIRRER', x: 267, y: 541, w: 120 },
  { text: 'MOULD LIF\nT', x: 392, y: 542, w: 143 },
  { text: 'HEATER', x: 540, y: 543, w: 170 },
  { text: 'LAYOUT', x: 715, y: 542, w: 144 },
]

const ScreenIcon = ({ kind }) => (
  <Svg width='16' height='16' viewBox='0 0 16 16' aria-hidden='true'>
    {kind === 'map'
      ? <><path d='M0 0h16v16H0z' fill={NAVY}/><path d='M2 5h12v9H2zM11 1h4v1h-4z' fill='#fff'/><path d='M4 6v7M8 6v7M12 6v7M2 10h12' stroke={NAVY} strokeWidth='1'/></>
      : <><path d='M.500 1.500h15v13H.500z' fill='#f6f9fe' stroke='#6584b4'/><path d='M1 2h14v2H1z' fill='#8db0ea'/></>}
    {kind === 'home' && <><path d='M3 9l5-5 5 5' fill='none' stroke='#8f6b42' strokeWidth='2'/><path d='M5 9h6v5H5z' fill='#dcc09a'/><path d='M7 10h2v4H7z' fill='#555'/><path d='M1 13h3v2H1zM12 13h3v2h-3z' fill='#58b047'/></>}
  </Svg>
)

const Header = ({ title, active }) => (
  <PanelHeader $active={active}>
    <h2>{title}</h2>
    <button aria-label={`Pin ${title}`}><Icon name='pin' size={20}/></button>
    <button aria-label={`Close ${title}`}><Icon name='close' size={20}/></button>
  </PanelHeader>
)

const ProjectPanel = () => {
  const [selected, setSelected] = useState('8 - I/O@STATUS')
  return (
    <Dock>
      <Panel>
        <Header title='Project' active/>
        <PanelBar $inset={8}>
          <Icon name='tree'/>
          <ViewModeButton aria-label='View mode'><Arrow/></ViewModeButton>
          <Icon name='rename'/>
        </PanelBar>
        <Scroller>
          <Tree>
            <li>
              <ul>
                {SCREENS.map((name, i) => (
                  <li key={name}>
                    <ScreenIcon kind={i === 0 ? 'map' : name === '4 - AUTO' ? 'home' : 'screen'}/>
                    <TreeButton $selected={selected === name} onClick={() => setSelected(name)}>{name}</TreeButton>
                  </li>
                ))}
              </ul>
            </li>
          </Tree>
          <VScroll>
            <button aria-label='Scroll up'><Chevron d='M1 9l5-5 5 5'/></button>
            <span/>
            <Thumb/>
            <span/>
            <button aria-label='Scroll down'><Chevron d='M1 3l5 5 5-5'/></button>
          </VScroll>
        </Scroller>
      </Panel>
      <TabStrip>
        <DockTab $active>Project</DockTab>
        <DockTab>Address</DockTab>
      </TabStrip>
    </Dock>
  )
}

const OutputPanel = () => (
  <Dock>
    <Panel>
      <Header title='Output'/>
      <PanelBar>
        <FilterButton $on><Icon name='message'/>Message</FilterButton>
        <FilterButton><Icon name='error'/>Error</FilterButton>
        <FilterButton><Icon name='warning'/>Warning</FilterButton>
        <Separator/>
        <ToolButton aria-label='Clear'><Icon name='clear'/></ToolButton>
      </PanelBar>
      <Scroller>
        <OutputList>
          <OutputTable><thead><tr><th>Message</th><th/></tr></thead></OutputTable>
          <OutputRows/>
        </OutputList>
      </Scroller>
    </Panel>
    <TabStrip>
      <DockTab $active>Output</DockTab>
      <DockTab>Search Results 1</DockTab>
      <DockTab>Search Results 2</DockTab>
    </TabStrip>
  </Dock>
)

const Screen = () => (
  <HmiScreen>
    <HmiLabel $x={42} $y={13} $w={901} $h={47} $fill='#c0c0c0' $ink='#000'>I/O STATUS</HmiLabel>
    {CHANNELS.map(c => (
      <React.Fragment key={c.cmd}>
        <CmdButton $x={c.x} $y={c.cmdY} $w={151} $h={45}>{`${c.cmd}\nOFF CMD`}</CmdButton>
        <HmiLabel $x={231} $y={c.y} $w={262} $h={45} $fill='#8080c0'>{c.fb}</HmiLabel>
        <Lamp $x={494} $y={c.lampY} $w={78} $h={45}>OFF</Lamp>
        <HmiLabel $x={601} $y={c.y} $w={262} $h={45} $fill='#8080ff'>{c.trip}</HmiLabel>
        <Lamp $x={864} $y={c.y} $w={80} $h={45} $green>OFF</Lamp>
      </React.Fragment>
    ))}
    {NAV.map(b => <NavButton key={b.text} $x={b.x} $y={b.y} $w={b.w} $h={54}>{b.text}</NavButton>)}
  </HmiScreen>
)

const EditorArea = () => (
  <Editor>
    <DocTabs>
      <button aria-label='Previous tab'>
        <Svg width='10' height='14' viewBox='0 0 10 14'><path d='M8 1v12L1 7z' fill='none' stroke='#666b73' strokeWidth='2'/></Svg>
      </button>
      <DocTab>
        <Slant/>
        <DocTabBody $left={14} $right={13}><button>Screen_1</button></DocTabBody>
      </DocTab>
      <DocTab>
        <DocTabBody $left={16} $right={18}><button>LAYOUT</button></DocTabBody>
      </DocTab>
      <DocTab $active $overlap>
        <Slant active/>
        <DocTabBody $active $left={14} $right={5}>
          <button>I/O@STATUS</button>
          <button aria-label='Close tab'><Icon name='close'/></button>
        </DocTabBody>
      </DocTab>
      <button aria-label='Next tab'>
        <Svg width='10' height='14' viewBox='0 0 10 14'><path d='M2 1v12l7-6z' fill='none' stroke='#666b73' strokeWidth='2'/></Svg>
      </button>
    </DocTabs>
    <Workspace><Screen/></Workspace>
    <HScroll>
      <button aria-label='Scroll left'><Chevron d='M8 1L3 6l5 5'/></button>
      <Thumb/>
      <span/>
      <button aria-label='Scroll right'><Chevron d='M4 1l5 5-5 5'/></button>
    </HScroll>
  </Editor>
)

const PropRow = ({ name, sub, children }) => (
  <tr>
    {sub && <Gutter/>}
    <PropName scope='row' colSpan={sub ? 1 : 2} $sub={sub}>{name}</PropName>
    <td>{children}</td>
  </tr>
)

const PropertiesPanel = () => (
  <Dock>
    <Panel>
      <Header title='Properties'/>
      <ObjectRow>
        <ObjectSelect>
          <select aria-label='Element' defaultValue='I/O@STATUS'><option>I/O@STATUS</option></select>
          <Svg width='12' height='8' viewBox='0 0 12 8'><path d='M1 1l5 5 5-5' fill='none' stroke='#444' strokeWidth='1'/></Svg>
        </ObjectSelect>
        <Spinner>
          <input aria-label='Element number' defaultValue='0'/>
          <span>
            <button aria-label='Increase'><Svg width='10' height='5' viewBox='0 0 10 5'><path d='M0 5h10L5 0z' fill='#555'/></Svg></button>
            <button aria-label='Decrease'><Svg width='10' height='5' viewBox='0 0 10 5'><path d='M0 0h10L5 5z' fill='#555'/></Svg></button>
          </span>
        </Spinner>
      </ObjectRow>
      <PropertyBox>
        <PropertyTable>
          <tbody>
            <PropRow name='Screen Name'>I/O@STATUS</PropRow>
            <PropRow name='Screen Properties'>Detail...</PropRow>
            <PropRow name='Background Color'><ColorValue>RGB(252, 252, 252)</ColorValue></PropRow>
            <PropRow name='Screen Lock Bit'>None</PropRow>
            <tr>
              <MacroHead colSpan={3}><span><Expander aria-label='Collapse Screen Macro'/>Screen Macro</span></MacroHead>
            </tr>
            <PropRow sub name='Screen Open Macro'>0</PropRow>
            <PropRow sub name='Screen Close Macro'>0</PropRow>
            <PropRow sub name='Screen Cycle Macro'>0</PropRow>
            <PropRow name='Width'>1024</PropRow>
            <PropRow name='Height'>600</PropRow>
          </tbody>
        </PropertyTable>
      </PropertyBox>
    </Panel>
    <TabStrip>
      <DockTab $active>Properties</DockTab>
      <DockTab $pad={6}>Element Bank</DockTab>
      <DockTab $pad={2}>Macro Man...</DockTab>
      <DockTab $pad={8}>Program ex...</DockTab>
    </TabStrip>
  </Dock>
)

const Bars = () => (
  <ToolRows>
    <ToolRow>
      <ToolBar>
        <Grip/>
        <Tools items={['file', '|', 'open', 'save', 'saveAs', '|']}/>
        <Tools dim items={['undo', 'redo', '|', 'cut', 'copy']}/>
        <Tools items={['paste', 'preview', '|', 'upload', 'download', '|', 'print', 'info']}/>
      </ToolBar>
      <ToolBar>
        <Grip/>
        <Combo label='Zoom' value='100%' raised $width={116}/>
        <Tools items={['zoomIn', 'zoomOut']}/>
        <Tools dim items={['zoomFit']}/>
      </ToolBar>
      <ToolBar>
        <Grip/>
        <Tools items={['rotateR', 'rotateL', 'stepR', 'stepL']}/>
      </ToolBar>
      <ToolBar>
        <Grip/>
        <Combo label='Language' value='Language1' raised $width={176}/>
      </ToolBar>
    </ToolRow>
    <ToolRow>
      <ToolBar>
        <Grip/>
        <Combo label='Font size' value='12' disabled $flat $width={86} $height={30} $gap={3} $fill='#f0f0f0'/>
        <Combo label='Font' value='Arial' disabled mark arrowFill='#f0f0f0' $flat $width={295} $height={34}
          $indent={23} $size={21} $ink='#666' $face='"Liberation Sans", sans-serif'/>
        <Tools dim items={['|', 'textLeft', 'textCenter', 'textRight', '|', 'textTop', 'textMiddle', 'textBottom', '|']}/>
        <ToolButton $wide aria-label='Text color'>
          <ColorLetter>A<ColorSwatch/></ColorLetter>
          <Arrow color='#777'/>
        </ToolButton>
        <Tools dim items={['bold', 'italic', 'underline']}/>
      </ToolBar>
      <ToolBar>
        <Grip/>
        <Tools dim items={['brush', 'photo', 'fit1', 'fit2', 'fit3', '|', 'picLeft', 'picCenter', 'picRight', '|', 'picTop', 'picMiddle', 'picBottom']}/>
      </ToolBar>
    </ToolRow>
    <ToolRow>
      <ToolBar>
        <Grip/>
        <Tools items={['pencil', 'square', 'circle', 'polygon', 'text', 'scale', 'table']}/>
      </ToolBar>
      <ToolBar>
        <Grip/>
        <Tools items={['on', 'meter', 'slider', 'tank', 'gauge', 'lamp', 'numeric', 'list', 'n', 'wave', 'trend', 'alarm', 'keyboard', 'recipe', 'pipe', 'pageAdd', 'flip']}/>
      </ToolBar>
      <ToolBar>
        <Grip/>
        <Combo label='State text' value='' disabled $flat $width={146} $height={30} $fill='#f0f0f0'/>
        <Tools items={['state0', 'state1']}/>
        <Combo label='State' value='State selection...' raised $width={161}/>
        <Tools items={['props', 'prevScreen', 'nextScreen', 'compile', 'dlAll', 'dlScreen', '|', 'simOn', 'simOff']}/>
      </ToolBar>
    </ToolRow>
  </ToolRows>
)

export default function App() {
  return (
    <Window>
      <GlobalStyle/>
      <TitleBar>
        <Svg width='24' height='24' viewBox='0 0 24 24' aria-hidden='true'>
          <rect x='.500' y='.500' width='23' height='23' rx='4' fill='#fff' stroke='#c9c2c2'/>
          <rect x='4' y='6' width='15' height='11' rx='1' fill='#fff' stroke='#1e9be0' strokeWidth='2'/>
          <path d='M12 11l5 1 4 5-2 3-5-4z' fill='#343c46'/>
        </Svg>
        <Title>DOPSoft - UPLOAD_9.3.22 - [I/O@STATUS]</Title>
        <WindowButton aria-label='Minimize'>
          <Svg width='16' height='16' viewBox='0 0 16 16'><path d='M0 8.500h16' stroke='#000'/></Svg>
        </WindowButton>
        <WindowButton aria-label='Restore'>
          <Svg width='16' height='16' viewBox='0 0 16 16'><path d='M1.500 4.500h10v10h-10zM4.500 4V1.500h10v10H12' fill='none' stroke='#000'/></Svg>
        </WindowButton>
        <WindowButton aria-label='Close'>
          <Svg width='16' height='16' viewBox='0 0 16 16'><path d='M1 1l14 14M15 1L1 15' stroke='#000'/></Svg>
        </WindowButton>
      </TitleBar>
      <MenuBar>
        <Grip $menu/>
        {MENUS.map(m => <MenuItem key={m}>{m}</MenuItem>)}
      </MenuBar>
      <Bars/>
      <Body>
        <LeftColumn>
          <ProjectPanel/>
          <OutputPanel/>
        </LeftColumn>
        <EditorArea/>
        <PropertiesPanel/>
      </Body>
      <ToolRow>
        <ToolBar>
          <Grip/>
          <Tools dim items={['group', 'ungroup']}/>
          <Tools items={['|', 'forward', 'backward', 'toFront', 'toBack', '|', 'alLeft', 'alRight', 'alTop', 'alBottom', '|', 'midH', 'midV', '|', 'spaceH', 'spaceV', '|', 'sameW', 'sameH', 'sameWH']}/>
        </ToolBar>
      </ToolRow>
      <StatusBar>
        <StatusCell $first/>
        <StatusCell>Download:USB</StatusCell>
        <StatusCell $pad={13}>[1041,342]</StatusCell>
        <StatusCell>DOP-110WS 65536 Colors Rotate 0 degree</StatusCell>
        <StatusCell $off>CAP</StatusCell>
        <StatusCell $off>NUM</StatusCell>
        <StatusCell $off>SCRL</StatusCell>
      </StatusBar>
    </Window>
  )
}
